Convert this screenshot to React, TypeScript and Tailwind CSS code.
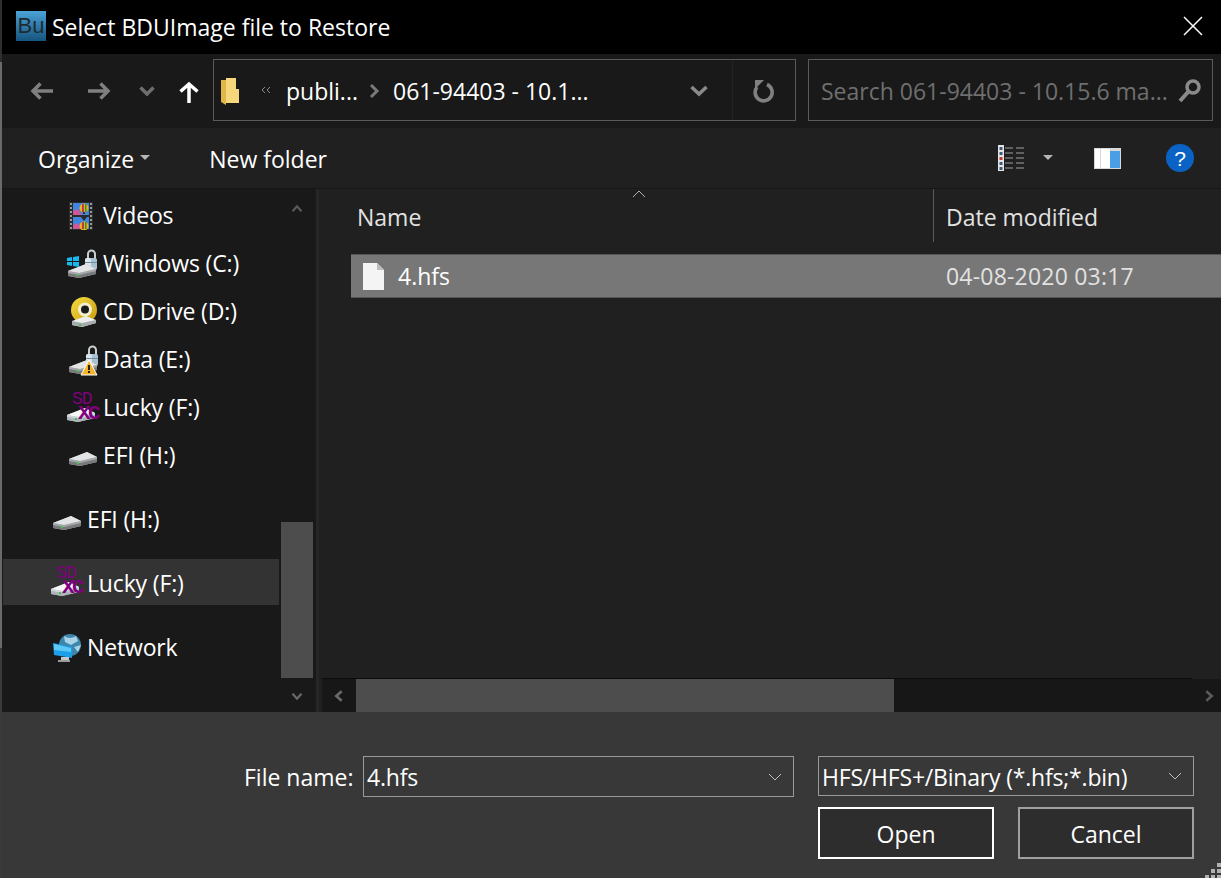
import React from "react";

const F = "font-['Open_Sans','Noto_Sans',sans-serif]";

function Drive({ light = false }: { light?: boolean }) {
  return (
    <svg width="30" height="16" viewBox="0 0 30 16" className="block">
      <path d="M1 8 L19 1 L29 6 L29 11 L12 15 L1 13 Z" fill="#b9bcbe" />
      <path d="M1 8 L19 1 L29 6 L12 10 Z" fill={light ? "#f6f7f8" : "#e2e4e5"} />
      <path d="M1 8 L12 10 L29 6 L29 8 L12 12 L1 10 Z" fill={light ? "#cfd6da" : "#a4a7a9"} />
      <path d="M1 10 L12 12 L29 8 L29 11 L12 15 L1 13 Z" fill={light ? "#aeb4b8" : "#77797b"} />
      <rect x="9" y="11" width="2" height="2" fill="#3ec44a" />
    </svg>
  );
}

function Lock() {
  return (
    <svg width="14" height="24" viewBox="0 0 14 24">
      <path d="M4 11 V6 a3.5 3.5 0 0 1 7 0 V11" fill="none" stroke="#c9ced1" strokeWidth="2" />
      <rect x="1" y="10" width="12" height="12" rx="2" fill="#a9c0d0" />
      <rect x="1" y="10" width="6" height="12" rx="2" fill="#dbe5ec" />
      <rect x="1" y="14" width="12" height="1" fill="#6d8ba0" />
    </svg>
  );
}

function VideosIcon() {
  return (
    <svg width="24" height="28" viewBox="0 0 24 28">
      <rect width="24" height="28" fill="#2b2b2b" />
      <rect x="4" y="1" width="16" height="12" fill="#3f86e0" />
      <rect x="4" y="15" width="16" height="12" fill="#3f86e0" />
      <path d="M4 13 V9 L9 7 L13 13 Z" fill="#d0569a" />
      <path d="M4 27 V23 L9 21 L13 27 Z" fill="#d0569a" />
      <circle cx="15" cy="6" r="4.5" fill="#e6b422" />
      <rect x="13" y="2" width="2" height="8" fill="#c33a3a" />
      <rect x="16" y="2" width="1.5" height="8" fill="#2f8f3a" />
      <rect x="14" y="10" width="2" height="2" fill="#4a2a12" />
      <circle cx="15" cy="24" r="4.5" fill="#e6b422" />
      <rect x="13" y="20" width="2" height="7" fill="#c33a3a" />
      <rect x="16" y="20" width="1.5" height="7" fill="#2f8f3a" />
      <path d="M12 15 H18 L15 19 Z" fill="#2a2a2a" />
      {[1, 5, 9, 13, 17, 21, 25].map((y) => (
        <React.Fragment key={y}>
          <rect x="1" y={y} width="2" height="2" fill="#9a9a9a" />
          <rect x="21" y={y} width="2" height="2" fill="#9a9a9a" />
        </React.Fragment>
      ))}
    </svg>
  );
}

function WindowsDrive() {
  return (
    <div className="relative w-[30px] h-[32px]">
      <div className="absolute left-[17px] top-0"><Lock /></div>
      <div className="absolute left-0 bottom-[1px]"><Drive /></div>
      <svg className="absolute left-0 top-[8px]" width="12" height="11" viewBox="0 0 12 11">
        <path d="M0 2 L5 1 V5 H0 Z M6 1 L12 0 V5 H6 Z M0 6 H5 V10 L0 9 Z M6 6 H12 V11 L6 10 Z" fill="#19b8ee" />
      </svg>
    </div>
  );
}

function CdDrive() {
  return (
    <div className="relative w-[30px] h-[30px]">
      <svg className="absolute left-[2px] top-0" width="26" height="26" viewBox="0 0 26 26">
        <defs>
          <linearGradient id="cd" x1="0" y1="0" x2="1" y2="1">
            <stop offset="0" stopColor="#f6dd40" />
            <stop offset="1" stopColor="#c79a10" />
          </linearGradient>
        </defs>
        <circle cx="13" cy="13" r="13" fill="url(#cd)" />
        <circle cx="14" cy="12.5" r="7" fill="#f4efd0" />
        <circle cx="14" cy="12.5" r="4" fill="#1c1c1c" />
      </svg>
      <div className="absolute left-[2px] bottom-[-1px]">
        <svg width="26" height="13" viewBox="0 0 26 13">
          <path d="M1 6 L15 1 L25 5 L25 8 L11 12 L1 10 Z" fill="#eceeef" />
          <path d="M1 6 L11 8 L25 5 L25 8 L11 12 L1 10 Z" fill="#a7abad" />
          <rect x="8" y="9" width="2" height="2" fill="#3ec44a" />
        </svg>
      </div>
    </div>
  );
}

function DataDrive() {
  return (
    <div className="relative w-[30px] h-[32px]">
      <div className="absolute left-[17px] top-0"><Lock /></div>
      <div className="absolute left-0 bottom-[1px]"><Drive /></div>
      <svg className="absolute left-[12px] bottom-0" width="18" height="17" viewBox="0 0 18 17">
        <path d="M9 1 L17 16 H1 Z" fill="#f4b42c" stroke="#fff" strokeWidth="1" strokeLinejoin="round" />
        <rect x="8" y="6" width="2" height="5" fill="#222" />
        <rect x="8" y="12" width="2" height="2" fill="#222" />
      </svg>
    </div>
  );
}

function SdDrive() {
  return (
    <div className="relative w-[32px] h-[32px]">
      <div className="absolute left-0 bottom-[1px]"><Drive light /></div>
      <span className="absolute left-[6px] top-0 text-[18px] leading-[14px] tracking-[-1px] text-[#800080] font-['Liberation_Mono',monospace]">SD</span>
      <span className="absolute left-[12px] top-[14px] text-[21px] leading-[16px] font-bold tracking-[-2.5px] text-[#800080] font-['Liberation_Mono',monospace]">XC</span>
    </div>
  );
}

function NetworkIcon() {
  return (
    <svg width="30" height="30" viewBox="0 0 30 30">
      <circle cx="18" cy="12" r="11" fill="#3f86ad" />
      <path d="M12 3 Q18 7 24 3 L26 8 L19 12 L13 9 Z M22 14 L29 12 L26 19 Z" fill="#a8d3e8" />
      <path d="M1 10 L20 14 L20 25 L2 22 Z" fill="#1c9fe8" />
      <path d="M2 11 L19 15 L19 19 L2 17 Z" fill="#5cc8f7" />
      <rect x="9" y="24" width="8" height="3" fill="#c8c8c8" />
      <rect x="6" y="27" width="12" height="2" fill="#9a9a9a" />
    </svg>
  );
}

function NavRow({ icon, label, indent, iw = "w-[34px]" }: { icon: React.ReactNode; label: string; indent: string; iw?: string }) {
  return (
    <div className={`flex items-center h-12 ${indent}`}>
      <div className={`${iw} flex justify-start items-center shrink-0`}>{icon}</div>
      <span className="text-[23px] leading-none text-white whitespace-nowrap tracking-[-0.15px] pb-[2px]">{label}</span>
    </div>
  );
}

function Chev({ d, stroke = "#7a7a7a", w = 18, h = 18, sw = 3 }: { d: string; stroke?: string; w?: number; h?: number; sw?: number }) {
  return (
    <svg width={w} height={h} viewBox="0 0 18 18" fill="none">
      <path d={d} stroke={stroke} strokeWidth={sw} />
    </svg>
  );
}

function Combo({ text, w, h }: { text: string; w: string; h: string }) {
  return (
    <div className={`${w} ${h} border border-[#9a9a9a] flex items-center justify-between pl-[3px] pr-[11px]`}>
      <span className="text-[23px] leading-none text-white whitespace-nowrap tracking-[-0.2px] pt-[2px]">{text}</span>
      <svg width="14" height="8" viewBox="0 0 14 8" fill="none">
        <path d="M1 1 L7 7 L13 1" stroke="#c0c0c0" strokeWidth="1" />
      </svg>
    </div>
  );
}

export default function App() {
  return (
    <div className={`w-[1221px] h-[878px] overflow-hidden flex bg-[#383838] ${F}`}>
      <div className="w-[2px] h-full flex flex-col shrink-0">
        <div className="h-[62px] bg-[#2e2e2e]" />
        <div className="h-[586px] bg-[#6a6a6a]" />
        <div className="flex-1 bg-[#3a3a3a]" />
      </div>
      <div className="flex-1 min-w-0 flex flex-col">
        {/* Title */}
        <div className="h-[54px] bg-black flex items-center shrink-0 relative">
          <div className="ml-[14px] mb-[3px] w-[30px] h-[30px] bg-gradient-to-b from-[#4ba3d8] to-[#14557f] flex items-center justify-center">
            <span className="text-[#1f2a33] text-[22px] leading-none font-['Liberation_Sans',sans-serif]">Bu</span>
          </div>
          <span className="ml-[6px] text-[23px] leading-none text-white whitespace-nowrap">Select BDUImage file to Restore</span>
          <svg className="ml-auto mr-[18px] mb-[3px]" width="20" height="20" viewBox="0 0 20 20" fill="none">
            <path d="M1 1 L19 19 M19 1 L1 19" stroke="#fff" strokeWidth="1.5" />
          </svg>
        </div>

        {/* Nav */}
        <div className="h-[74px] bg-[#191919] flex items-center shrink-0">
          <div className="w-[211px] h-full flex items-center relative shrink-0">
            <svg className="ml-[28px]" width="23" height="18" viewBox="0 0 23 18" fill="none">
              <path d="M23 9 H3 M10.5 1.5 L3 9 L10.5 16.5" stroke="#808080" strokeWidth="3.5" />
            </svg>
            <svg className="ml-[35px]" width="23" height="18" viewBox="0 0 23 18" fill="none">
              <path d="M0 9 H20 M12.5 1.5 L20 9 L12.5 16.5" stroke="#808080" strokeWidth="3.5" />
            </svg>
            <svg className="ml-[28px]" width="16" height="10" viewBox="0 0 16 10" fill="none">
              <path d="M1.5 1.5 L8 8 L14.5 1.5" stroke="#6e6e6e" strokeWidth="3.5" />
            </svg>
            <svg className="ml-[24px] mt-[2px]" width="20" height="22" viewBox="0 0 20 22" fill="none">
              <path d="M10 22 V3 M1.5 10.5 L10 3 L18.5 10.5" stroke="#fff" strokeWidth="3.5" />
            </svg>
          </div>
          <div className="w-[583px] h-[62px] mb-[2px] pt-[2px] border border-[#5a5a5a] flex items-center shrink-0">
            <svg className="ml-[7px]" width="18" height="27" viewBox="0 0 18 27">
              <path d="M0 2 H5 V27 L0 24 Z" fill="#e0b64a" />
              <path d="M5 0 H15 V11 H18 V25 H5 Z" fill="#f7d77c" />
            </svg>
            <svg className="ml-[22px] mb-[3px]" width="10" height="8" viewBox="0 0 10 8" fill="none">
              <path d="M4 1 L1 4 L4 7 M9 1 L6 4 L9 7" stroke="#8a8a8a" strokeWidth="1" />
            </svg>
            <span className="ml-[15px] text-[23px] leading-none text-white whitespace-nowrap">publi...</span>
            <svg className="ml-[11px]" width="12" height="16" viewBox="0 0 12 16" fill="none">
              <path d="M2 2 L8 8 L2 14" stroke="#7a7a7a" strokeWidth="3" />
            </svg>
            <span className="ml-[12px] text-[23px] leading-none text-white whitespace-nowrap">061-94403 - 10.1...</span>
            <svg className="ml-auto mr-[24px]" width="18" height="12" viewBox="0 0 18 12" fill="none">
              <path d="M1.5 2 L9 9 L16.5 2" stroke="#8a8a8a" strokeWidth="3.5" />
            </svg>
            <div className="w-[63px] self-stretch -mt-[2px] border-l border-[#232323] flex items-center justify-center">
              <svg width="24" height="26" viewBox="0 0 24 26" fill="none">
                <path d="M15 7.5 A8.5 8.5 0 1 1 5 10" stroke="#808080" strokeWidth="3.6" />
                <path d="M12 3 H3 V12 Z" fill="#808080" />
              </svg>
            </div>
          </div>
          <div className="ml-[12px] w-[405px] h-[62px] mb-[2px] pt-[2px] border border-[#5a5a5a] flex items-center">
            <span className="ml-[12px] text-[23px] leading-none text-[#6f6f6f] whitespace-nowrap">Search 061-94403 - 10.15.6 ma...</span>
            <svg className="ml-auto mr-[11px]" width="23" height="24" viewBox="0 0 23 24" fill="none">
              <circle cx="15" cy="8" r="6" stroke="#8a8a8a" strokeWidth="3.5" />
              <path d="M10 13 L2 22" stroke="#8a8a8a" strokeWidth="4" />
            </svg>
          </div>
        </div>

        {/* Toolbar */}
        <div className="h-[61px] bg-[#202020] flex items-center shrink-0 border-b border-[#161616]">
          <span className="ml-[36px] text-[23px] leading-none text-white whitespace-nowrap pt-[2px]">Organize</span>
          <svg className="ml-[6px]" width="10" height="6" viewBox="0 0 10 6"><path d="M0 0 H10 L5 5 Z" fill="#b5b5b5" /></svg>
          <span className="ml-[59px] text-[23px] leading-none text-white whitespace-nowrap pt-[2px]">New folder</span>
          <svg className="ml-auto" width="26" height="26" viewBox="0 0 26 26">
            <rect x="0" y="0" width="6" height="26" fill="#e5e5e5" />
            {[2, 7, 12, 17, 22].map((y, i) => (
              <rect key={y} x="1.5" y={y} width="3" height="3" fill={i === 2 ? "#c0392b" : "#3a5a7a"} />
            ))}
            {[2, 7, 12, 17, 22].map((y) => (
              <path key={y} d={`M7 ${y + 1} H15 M18 ${y + 1} H26`} stroke="#a0a0a0" strokeWidth="1" />
            ))}
          </svg>
          <svg className="ml-[19px]" width="10" height="6" viewBox="0 0 10 6"><path d="M0 0 H10 L5 5 Z" fill="#b5b5b5" /></svg>
          <svg className="ml-[41px]" width="27" height="21" viewBox="0 0 27 21">
            <rect width="27" height="21" fill="#d8d8d8" />
            <rect x="1" y="1" width="5" height="19" fill="#fff" />
            <rect x="7" y="1" width="9" height="19" fill="#fff" />
            <rect x="16" y="3" width="10" height="17" fill="#4a9ee6" />
          </svg>
          <div className="ml-[45px] mr-[27px] w-[28px] h-[28px] rounded-full bg-[#0a63c4] flex items-center justify-center">
            <span className="text-white text-[21px] leading-none font-['Liberation_Sans',sans-serif]">?</span>
          </div>
        </div>

        {/* Main */}
        <div className="flex-1 min-h-0 flex">
          <div className="w-[314px] bg-[#191919] shrink-0 relative">
            <div className="pt-[3px]">
              <NavRow indent="pl-[67px]" icon={<VideosIcon />} label="Videos" iw="w-[34px]" />
              <NavRow indent="pl-[65px]" icon={<WindowsDrive />} label="Windows (C:)" iw="w-[36px]" />
              <NavRow indent="pl-[67px]" icon={<CdDrive />} label="CD Drive (D:)" iw="w-[34px]" />
              <NavRow indent="pl-[66px]" icon={<DataDrive />} label="Data (E:)" iw="w-[35px]" />
              <NavRow indent="pl-[64px]" icon={<SdDrive />} label="Lucky (F:)" iw="w-[37px]" />
              <NavRow indent="pl-[66px]" icon={<div className="mt-[6px]"><Drive /></div>} label="EFI (H:)" iw="w-[35px]" />
              <div className="h-4" />
              <NavRow indent="pl-[50px]" icon={<div className="mt-[6px]"><Drive /></div>} label="EFI (H:)" iw="w-[35px]" />
              <div className="h-[14px]" />
              <div className="w-[276px] ml-px h-[46px] my-px bg-[#333333] flex items-center pl-[47px]">
                <div className="w-[37px] shrink-0"><SdDrive /></div>
                <span className="text-[23px] leading-none text-white whitespace-nowrap tracking-[-0.15px] pt-[2px]">Lucky (F:)</span>
              </div>
              <div className="h-[18px]" />
              <NavRow indent="pl-[50px]" icon={<NetworkIcon />} label="Network" iw="w-[35px]" />
            </div>
            {/* scrollbar */}
            <div className="absolute left-[279px] top-0 bottom-0 w-[32px] flex flex-col items-center">
              <div className="h-[24px] flex items-end">
                <Chev w={14} h={10} d="M1 15 L9 6 L17 15" stroke="#5a5a5a" sw={4} />
              </div>
              <div className="w-[32px] h-[156px] mt-[309px] bg-[#4d4d4d]" />
              <div className="mt-[14px]">
                <Chev w={14} h={10} d="M1 3 L9 12 L17 3" stroke="#6a6a6a" sw={4} />
              </div>
            </div>
          </div>
          <div className="w-[6px] bg-[#202020] shrink-0 border-l-[3px] border-[#262626]" />
          <div className="flex-1 min-w-0 bg-[#202020] flex flex-col relative">
            <svg className="absolute left-[310px] top-[1px]" width="14" height="8" viewBox="0 0 14 8" fill="none">
              <path d="M1 7 L7 1 L13 7" stroke="#b0b0b0" strokeWidth="1" />
            </svg>
            <div className="h-[53px] flex items-start shrink-0">
              <div className="w-[612px] h-[53px] pt-[4px] border-r border-[#5a5a5a] flex items-center pl-[35px] shrink-0">
                <span className="text-[23px] leading-none text-[#e2e2e2]">Name</span>
              </div>
              <span className="ml-[12px] h-[53px] pt-[4px] flex items-center text-[23px] leading-none text-[#e2e2e2] whitespace-nowrap">Date modified</span>
            </div>
            <div className="ml-[29px] mt-[12px] h-[44px] bg-[#777777] border-y border-[#555555] flex items-center">
              <svg className="ml-[12px]" width="21" height="27" viewBox="0 0 21 27">
                <path d="M0 0 H14 L21 7 V27 H0 Z" fill="#f4f4f4" />
                <path d="M14 0 L21 7 H14 Z" fill="#bdbdbd" />
              </svg>
              <span className="ml-[14px] text-[23px] leading-none text-white">4.hfs</span>
              <span className="absolute left-[624px] text-[23px] leading-none text-[#e2e2e2] whitespace-nowrap tracking-[0.2px]">04-08-2020 03:17</span>
            </div>
            <div className="mt-auto w-[870px] h-px bg-[#0c0c0c]" />
            <div className="h-[33px] bg-[#171717] flex items-center">
              <div className="w-[34px] flex justify-center">
                <Chev w={12} h={14} d="M13 2 L5 9 L13 16" stroke="#6a6a6a" sw={4} />
              </div>
              <div className="w-[538px] h-full bg-[#4d4d4d]" />
              <div className="ml-auto mr-[6px]">
                <Chev w={12} h={14} d="M5 2 L13 9 L5 16" stroke="#5a5a5a" sw={4} />
              </div>
            </div>
          </div>
        </div>

        {/* Bottom */}
        <div className="h-[166px] bg-[#383838] shrink-0 flex flex-col relative">
          <div className="mt-[44px] flex items-start">
            <span className="ml-[242px] w-[119px] h-[41px] pt-[2px] flex items-center text-[23px] leading-none text-white whitespace-nowrap">File name:</span>
            <Combo text="4.hfs" w="w-[431px]" h="h-[41px]" />
            <div className="ml-[24px]">
              <Combo text="HFS/HFS+/Binary (*.hfs;*.bin)" w="w-[376px]" h="h-[40px]" />
            </div>
          </div>
          <div className="mt-[10px] ml-[816px] flex gap-[24px]">
            <div className="w-[176px] h-[52px] pt-[2px] border-2 border-white bg-[#2d2d2d] flex items-center justify-center text-[23px] leading-none text-white">Open</div>
            <div className="w-[176px] h-[52px] pt-[2px] border-2 border-[#a0a0a0] bg-[#2d2d2d] flex items-center justify-center text-[23px] leading-none text-white">Cancel</div>
          </div>
          <svg className="absolute right-0 bottom-0" width="16" height="15" viewBox="0 0 16 15">
            {[[12,0],[6,6],[12,6],[0,12],[6,12],[12,12]].map(([x, y]) => (
              <rect key={`${x}-${y}`} x={x} y={y} width="4" height="4" fill="#b0b0b0" />
            ))}
          </svg>
        </div>
      </div>
    </div>
  );
}
